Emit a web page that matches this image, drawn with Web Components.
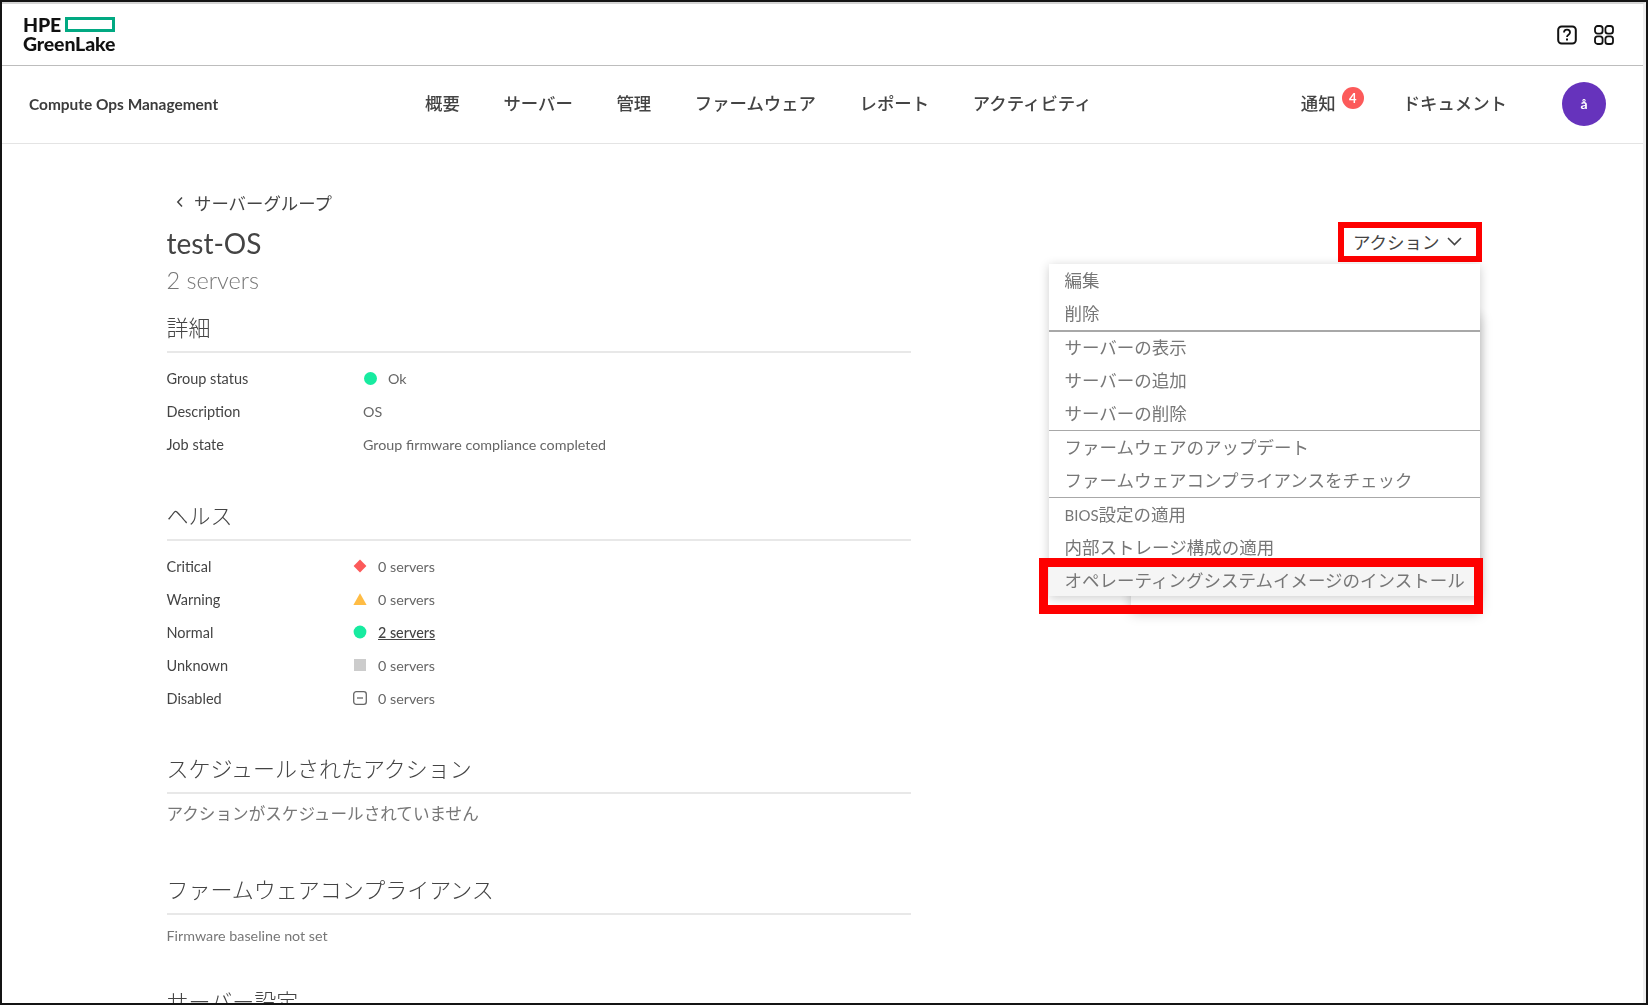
<!DOCTYPE html>
<html lang="ja"><head><meta charset="utf-8"><title>test-OS</title>
<style>
html,body{margin:0;padding:0;background:#fff;overflow:hidden}
body{font-family:"Lato","Noto Sans CJK JP",sans-serif;color:#444}
</style></head><body>
<app-frame>
  <top-bar></top-bar>
  <nav-bar></nav-bar>
  <group-page></group-page>
</app-frame>
<script>
const FONT='"Lato","Noto Sans CJK JP",sans-serif';
function el(name,css,html){
  customElements.define(name,class extends HTMLElement{
    constructor(){super();this.attachShadow({mode:'open'}).innerHTML='<style>'+css+'</style>'+html(this);}
  });
}
el('app-frame',`:host{display:block;box-sizing:border-box;width:1648px;height:1005px;border:2px solid #141414;overflow:hidden;background:#fff;font-family:${FONT};position:relative}
.in{height:100%;box-sizing:border-box;border-top:2px solid #d4d4d4;border-right:3px solid #efefef;overflow:hidden;filter:blur(.3px)}`,
()=>`<div class="in"><slot></slot></div>`);

el('top-bar',`:host{display:flex;align-items:center;justify-content:space-between;box-sizing:border-box;height:62px;padding:0 29px 2px 21px;border-bottom:1.5px solid #bdbdbd}
.logo{display:grid;grid-template-columns:auto auto;column-gap:4px;row-gap:0;align-items:center;font-weight:900;color:#111;line-height:19px;width:96px;justify-content:start}
.hpe{font-size:19.5px;letter-spacing:-.2px}
.box{width:50px;height:15px;box-sizing:border-box;border:3px solid #01a982}
.gl{grid-column:1/3;font-size:19.5px;letter-spacing:-.15px}
.ic{display:flex;gap:17px;align-items:center;margin-bottom:-2px}
svg{display:block}`,
()=>`<div class="logo"><span class="hpe">HPE</span><span class="box"></span><span class="gl">GreenLake</span></div>
<div class="ic">
<svg width="20" height="20" viewBox="0 0 20 20" fill="none" stroke="#111" stroke-width="2"><rect x="1.2" y="1.5" width="17.6" height="17" rx="3.5"/><path d="M7 7.6c0-1.9 1.4-3 3-3s3 1.1 3 2.8c0 2.3-3 2.3-3 4.6" stroke-width="1.8"/><path d="M10 13.6v1.9" stroke-width="2"/></svg>
<svg width="20" height="20" viewBox="0 0 20 20" fill="none" stroke="#111" stroke-width="1.8"><rect x="1" y="1" width="7.6" height="7.6" rx="2.6"/><rect x="11.4" y="1" width="7.6" height="7.6" rx="2.6"/><rect x="1" y="11.4" width="7.6" height="7.6" rx="2.6"/><rect x="11.4" y="11.4" width="7.6" height="7.6" rx="2.6"/></svg>
</div>`);

el('nav-bar',`:host{display:flex;align-items:center;box-sizing:border-box;height:78px;padding:0 37px 2px 27px;border-bottom:1.5px solid #e4e4e4;color:#444;position:relative}
.brand{font-weight:700;font-size:15.45px;width:396px;flex:none;color:#3c3c3c}
.links{display:flex;gap:43.6px;font-size:17.4px;font-weight:500;flex:1;padding-bottom:2px}
.r{display:flex;align-items:center;font-size:17.4px;font-weight:500}
.note{position:relative;margin-right:67px;padding-bottom:2px}
.badge{position:absolute;left:41px;top:-3px;width:22px;height:22px;border-radius:50%;background:#fc5a5a;color:#fff;font-size:13px;line-height:22px;text-align:center;font-weight:700}
.doc{margin-right:55px;padding-bottom:2px}
.av{width:44px;height:44px;border-radius:50%;background:#6633bc;color:#fff;font-size:14px;font-weight:700;display:flex;align-items:center;justify-content:center}`,
()=>`<div class="brand">Compute Ops Management</div>
<div class="links"><span>概要</span><span>サーバー</span><span>管理</span><span>ファームウェア</span><span>レポート</span><span>アクティビティ</span></div>
<div class="r"><span class="note">通知<span class="badge">4</span></span><span class="doc">ドキュメント</span><span class="av">å</span></div>`);

el('health-icon',`:host{display:inline-flex;width:18px;height:18px;align-items:center;justify-content:center}svg{display:block}`,
h=>({
 critical:`<svg width="16" height="16" viewBox="0 0 16 16"><path d="M8 1.6 14.4 8 8 14.4 1.6 8z" fill="#fc5a5a"/></svg>`,
 warning:`<svg width="16" height="16" viewBox="0 0 16 16"><path d="M8 2.2 14.6 14H1.4z" fill="#ffbc44"/></svg>`,
 normal:`<svg width="16" height="16" viewBox="0 0 16 16"><circle cx="8" cy="8" r="6.4" fill="#17eba0"/></svg>`,
 unknown:`<svg width="16" height="16" viewBox="0 0 16 16"><rect x="2" y="2" width="12" height="12" fill="#cccccc"/></svg>`,
 disabled:`<svg width="16" height="16" viewBox="0 0 16 16" fill="none" stroke="#666" stroke-width="1.3"><rect x="1.7" y="1.7" width="12.6" height="12.6" rx="2.6"/><path d="M5 8h6"/></svg>`
}[h.getAttribute('kind')]));

el('kv-row',`:host{display:grid;grid-template-columns:var(--label,197px) 1fr;align-items:center;height:33px;font-size:14.5px;color:#444}
.v{color:#666;display:flex;align-items:center;font-size:14.3px}`,
()=>`<span><slot name="k"></slot></span><span class="v"><slot></slot></span>`);

el('page-section',`:host{display:block}
h2{margin:0;font-size:var(--h,22px);font-weight:300;color:#444;line-height:32px;padding-bottom:7px;border-bottom:2px solid #e8e8e8}
.b{display:block;padding-top:9px}`,
h=>`<h2>${h.getAttribute('title')}</h2><span class="b"><slot></slot></span>`);

el('action-menu',`:host{display:block;position:relative;width:444px;height:400px;font-size:17.5px;color:#777}
.btn{position:absolute;right:1px;top:0;box-sizing:border-box;width:144px;height:40px;border:6px solid #fe0000;display:flex;align-items:center;gap:7px;padding:0 0 2px 9px;color:#444;white-space:nowrap;background:#fff}
.under{position:absolute;right:3px;top:90px;width:349px;height:297px;box-shadow:0 4px 12px rgba(0,0,0,.22)}
.menu{position:absolute;left:9.5px;right:3px;top:42px;background:#fff;box-shadow:0 2px 10px rgba(0,0,0,.2)}
.g{border-bottom:1.5px solid #a8a8a8}
.g:first-child{border-bottom-width:2px;margin-bottom:-1px}
.g:last-child{border-bottom:0}
.i{height:33px;line-height:33px;padding-left:16px;white-space:nowrap}
.i b{font-weight:400;font-size:15px}
.hl{background:#f5f5f5;height:32px}
.mark{position:absolute;left:0;right:0;top:336px;height:56px;box-sizing:border-box;border:9.5px solid #fe0000}`,
()=>`<div class="under"></div>
<div class="btn">アクション<svg width="15" height="9" viewBox="0 0 15 9" fill="none" stroke="#444" stroke-width="1.6"><path d="M1 1l6.5 6.5L14 1"/></svg></div>
<div class="menu">
<div class="g"><div class="i">編集</div><div class="i">削除</div></div>
<div class="g"><div class="i">サーバーの表示</div><div class="i">サーバーの追加</div><div class="i">サーバーの削除</div></div>
<div class="g"><div class="i">ファームウェアのアップデート</div><div class="i">ファームウェアコンプライアンスをチェック</div></div>
<div class="g"><div class="i"><b>BIOS</b>設定の適用</div><div class="i">内部ストレージ構成の適用</div><div class="i hl">オペレーティングシステムイメージのインストール</div></div>
</div>
<div class="mark"></div>`);

el('group-page',`:host{display:block;position:relative;padding:45px 0 0 164.5px;color:#444}
.wrap{width:744.5px}
.back{display:flex;align-items:center;gap:10px;font-size:17.4px;height:26px;padding-left:9.5px;margin-bottom:7px;color:#444}
h1{margin:0;font-size:28px;font-weight:400;line-height:42px;color:#444}
.sub{font-size:23.5px;font-weight:300;color:#777;line-height:32px;margin-bottom:16px}
.dot{width:13px;height:13px;border-radius:50%;background:#17eba0;display:inline-block;margin:0 11px 0 1px}
.health{--label:184.5px}
.health health-icon{margin-right:9px}
a{color:#444;text-decoration:underline;font-weight:500}
.muted{color:#777;font-size:16.6px;line-height:22px}
.small{color:#777;font-size:14.3px;line-height:24px}
.acts{position:absolute;left:1037px;top:78px}`,
()=>`<div class="wrap">
<div class="back"><svg width="8" height="12" viewBox="0 0 8 12" fill="none" stroke="#444" stroke-width="1.5"><path d="M6 1.5 1.8 6 6 10.5"/></svg><span>サーバーグループ</span></div>
<h1>test-OS</h1>
<div class="sub">2 servers</div>
<page-section title="詳細" style="margin-bottom:38.5px">
<kv-row style="--label:196.5px"><span slot="k">Group status</span><span class="dot"></span><span>Ok</span></kv-row>
<kv-row style="--label:196.5px"><span slot="k">Description</span>OS</kv-row>
<kv-row style="--label:196.5px"><span slot="k">Job state</span>Group firmware compliance completed</kv-row>
</page-section>
<page-section title="ヘルス" class="health" style="margin-bottom:38.5px">
<kv-row><span slot="k">Critical</span><health-icon kind="critical"></health-icon><span>0 servers</span></kv-row>
<kv-row><span slot="k">Warning</span><health-icon kind="warning"></health-icon><span>0 servers</span></kv-row>
<kv-row><span slot="k">Normal</span><health-icon kind="normal"></health-icon><a>2 servers</a></kv-row>
<kv-row><span slot="k">Unknown</span><health-icon kind="unknown"></health-icon><span>0 servers</span></kv-row>
<kv-row><span slot="k">Disabled</span><health-icon kind="disabled"></health-icon><span>0 servers</span></kv-row>
</page-section>
<page-section title="スケジュールされたアクション" style="margin-bottom:49px"><div class="muted">アクションがスケジュールされていません</div></page-section>
<page-section title="ファームウェアコンプライアンス" style="margin-bottom:38px"><div class="small">Firmware baseline not set</div></page-section>
<page-section title="サーバー設定"></page-section>
</div>
<div class="acts"><action-menu></action-menu></div>`);
</script>
</body></html>
